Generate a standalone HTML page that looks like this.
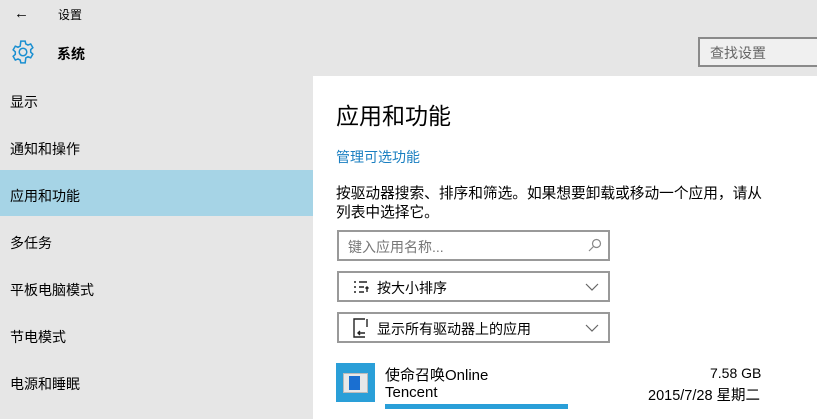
<!DOCTYPE html>
<html><head><meta charset="utf-8"><style>
*{margin:0;padding:0;box-sizing:border-box}
body{width:817px;height:419px;overflow:hidden;background:#e6e6e6;font-family:"Liberation Sans","Noto Sans CJK SC",sans-serif;color:#000;position:relative}
.a{position:absolute;white-space:nowrap}
.main{position:absolute;left:313px;top:76px;width:504px;height:343px;background:#fff}
.nav{left:10px;font-size:14px}
.box{position:absolute;left:337px;width:273px;height:31px;border:2px solid #999;background:#fff}
.chev{position:absolute;right:8px;top:6px}
</style></head><body>
<div class="a" style="left:14px;top:5px;font-size:15px">←</div>
<div class="a" style="left:58px;top:6px;font-size:12px">设置</div>
<svg class="a" style="left:10px;top:39px" width="26" height="26" viewBox="0 0 24 24" fill="none" stroke="#1a8fd1" stroke-width="1.4"><path d="M10 2h4l.6 2.6 2 1 2.5-1 2 3.4-2 1.8v2.4l2 1.8-2 3.4-2.5-1-2 1L14 22h-4l-.6-2.6-2-1-2.5 1-2-3.4 2-1.8V11.8l-2-1.8 2-3.4 2.5 1 2-1z"/><circle cx="12" cy="12" r="3.5"/></svg>
<div class="a" style="left:57px;top:44px;font-size:14px;font-weight:bold">系统</div>
<div class="a" style="left:698px;top:37px;width:125px;height:30px;border:2px solid #8a8a8a;background:#f0f0f0;font-size:14px;color:#666;padding:4px 0 0 10px">查找设置</div>
<div class="a" style="left:0;top:76px;width:313px;height:343px;background:#e6e6e6"></div>
<div class="a" style="left:0;top:170px;width:313px;height:46px;background:#a6d4e6"></div>
<div class="a nav" style="top:92px">显示</div>
<div class="a nav" style="top:139px">通知和操作</div>
<div class="a nav" style="top:186px">应用和功能</div>
<div class="a nav" style="top:233px">多任务</div>
<div class="a nav" style="top:280px">平板电脑模式</div>
<div class="a nav" style="top:327px">节电模式</div>
<div class="a nav" style="top:374px">电源和睡眠</div>
<div class="main"></div>
<div class="a" style="left:336px;top:97px;font-size:23px">应用和功能</div>
<div class="a" style="left:336px;top:147px;font-size:14px;color:#1a7fc1">管理可选功能</div>
<div class="a" style="left:336px;top:185px;font-size:14.7px;line-height:19px">按驱动器搜索、排序和筛选。如果想要卸载或移动一个应用，请从<br>列表中选择它。</div>
<div class="box" style="top:230px"><span class="a" style="left:9px;top:5px;font-size:14px;color:#777">键入应用名称...</span>
<svg class="a" style="right:6px;top:6px" width="14" height="14" viewBox="0 0 14 14" fill="none" stroke="#888" stroke-width="1.2"><circle cx="8.5" cy="5.5" r="4"/><path d="M5.5 8.5L1 13"/></svg></div>
<div class="box" style="top:271px">
<svg class="a" style="left:14px;top:7px" width="18" height="15" viewBox="0 0 18 15" fill="none" stroke="#222" stroke-width="1.4"><path d="M1 2h2M1 7h2M1 12h2M6 2h8M6 7h5M6 12h5M14 12V7M12.5 8.5L14 7l1.5 1.5"/></svg>
<span class="a" style="left:38px;top:5px;font-size:14px">按大小排序</span>
<svg class="chev" width="16" height="16" viewBox="0 0 16 16" fill="none" stroke="#666" stroke-width="1.2"><path d="M2 5l6 6 6-6"/></svg></div>
<div class="box" style="top:312px">
<svg class="a" style="left:13px;top:4px" width="20" height="21" viewBox="0 0 20 21" fill="none" stroke="#222" stroke-width="1.4"><path d="M13 1H2v18h11M15 1v8M6 15h7M8 13l-2 2 2 2"/></svg>
<span class="a" style="left:38px;top:5px;font-size:14px">显示所有驱动器上的应用</span>
<svg class="chev" width="16" height="16" viewBox="0 0 16 16" fill="none" stroke="#666" stroke-width="1.2"><path d="M2 5l6 6 6-6"/></svg></div>
<div class="a" style="left:336px;top:363px;width:39px;height:39px;background:#2a9fd8"></div>
<div class="a" style="left:343px;top:373px;width:25px;height:20px;background:#e8e8e8;border:1px solid #bbb"></div>
<div class="a" style="left:349px;top:376px;width:11px;height:14px;background:#1a6fd1"></div>
<div class="a" style="left:385px;top:364px;font-size:15px">使命召唤Online</div>
<div class="a" style="left:385px;top:384px;font-size:15px">Tencent</div>
<div class="a" style="left:385px;top:404px;width:183px;height:5px;background:#2a9fd8"></div>
<div class="a" style="left:710px;top:365px;font-size:14px">7.58 GB</div>
<div class="a" style="left:648px;top:384px;font-size:14.5px">2015/7/28 星期二</div>
</body></html>
